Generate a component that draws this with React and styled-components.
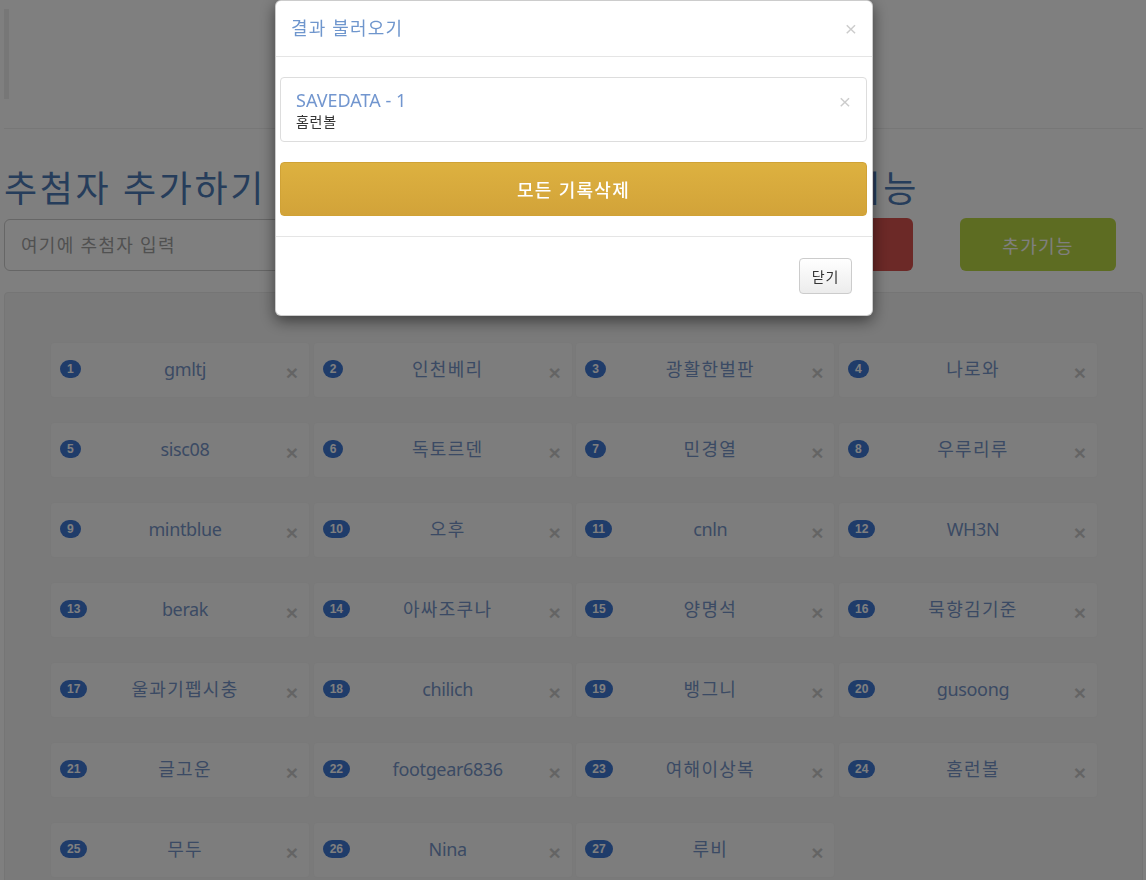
import React from "react";
import styled, { createGlobalStyle } from "styled-components";

const FONT = `"Noto Sans", "Noto Sans CJK KR", sans-serif`;
const KO = "0.072em";

const Global = createGlobalStyle`
  html, body { margin: 0; padding: 0; overflow: hidden; background: #fff; }
  body { font-family: ${FONT}; font-size: 14px; color: #333; }
  * { box-sizing: border-box; }
`;

const Page = styled.div`
  padding: 9px 3px 0 4px;
  height: 880px;
  overflow: hidden;
`;

const Quote = styled.blockquote`
  margin: 0;
  height: 90px;
  border-left: 5px solid #eee;
  padding: 10px 20px;
`;

const Rule = styled.hr`
  margin: 29px 0 39px;
  border: 0;
  border-top: 1px solid #eee;
`;

const Columns = styled.div`
  display: grid;
  grid-template-columns: 1fr 200px 156px;
  column-gap: 47px;
  padding-right: 27px;
`;

const Heading = styled.h1`
  margin: 0;
  font-size: 36px;
  line-height: 40px;
  font-weight: 400;
  letter-spacing: ${KO};
  color: #4d7bb6;
  white-space: nowrap;
  text-align: ${(p) => (p.$end ? "right" : "left")};
  margin-right: ${(p) => (p.$end ? "-6px" : "0")};
  margin-top: 1px;
`;

const Toolbar = styled(Columns)`
  margin-top: 9px;
  height: 53px;
  align-items: stretch;
`;

const Input = styled.input`
  margin-top: 1px;
  height: 52px;
  border: 1px solid #ccc;
  border-radius: 6px;
  padding: 0 16px;
  font-family: ${FONT};
  font-size: 18px;
  letter-spacing: ${KO};
  color: #555;
  &::placeholder { color: #a2a2a2; }
`;

const ActionButton = styled.button`
  border: 0;
  border-radius: 6px;
  background: ${(p) => p.$bg};
  color: #fff;
  font-family: ${FONT};
  font-size: 18px;
  letter-spacing: ${KO};
`;

const Well = styled.div`
  margin-top: 21px;
  background: #f5f5f5;
  border: 1px solid #eaeaea;
  border-radius: 4px;
  padding: 49px 44px 40px 45px;
`;

const Grid = styled.div`
  display: grid;
  grid-template-columns: repeat(4, 1fr);
  column-gap: 2.67px;
  row-gap: 24px;
`;

const Cell = styled.div`
  height: 56px;
  background: #fbfbfb;
  border: 1px solid #f2f2f2;
  border-radius: 4px;
  display: grid;
  grid-template-columns: 30px 1fr 24px;
  align-items: center;
  padding: 0 5px 0 9px;
`;

const Badge = styled.span`
  justify-self: start;
  margin-top: -3px;
  min-width: 10px;
  padding: 3px 7px;
  font-size: 12px;
  font-weight: 700;
  line-height: 12px;
  color: #fff;
  background: #3f78d4;
  border-radius: 10px;
  text-align: center;
  font-family: "Liberation Sans", sans-serif;
`;

const Name = styled.span`
  text-align: center;
  font-size: 18px;
  line-height: 26px;
  color: #7695c8;
  margin-top: -2px;
  white-space: nowrap;
  letter-spacing: ${(p) => (p.$hangul ? KO : "-0.02em")};
`;

const Close = styled.span`
  justify-self: ${(p) => (p.$end ? "end" : "center")};
  font-size: 21px;
  font-weight: ${(p) => (p.$bold ? 700 : 400)};
  line-height: 1;
  color: #000;
  opacity: 0.2;
  font-family: "Liberation Sans", sans-serif;
  margin-top: ${(p) => p.$dy || "0px"};
`;

const Backdrop = styled.div`
  position: fixed;
  inset: 0;
  background: rgba(0, 0, 0, 0.5);
`;

const Modal = styled.div`
  position: fixed;
  top: 0;
  left: 275px;
  width: 598px;
  background: #fff;
  border: 1px solid rgba(0, 0, 0, 0.2);
  border-radius: 6px;
  box-shadow: 0 5px 15px rgba(0, 0, 0, 0.5);
`;

const ModalHeader = styled.div`
  display: flex;
  align-items: center;
  justify-content: space-between;
  padding: 15px;
  border-bottom: 1px solid #e5e5e5;
`;

const ModalTitle = styled.h4`
  margin: 0;
  font-size: 18px;
  line-height: 25px;
  font-weight: 400;
  letter-spacing: 0.065em;
  color: #6f96cd;
`;

const ModalBody = styled.div`
  padding: 20px 5px 20px 4px;
`;

const SaveItem = styled.div`
  border: 1px solid #ddd;
  border-radius: 4px;
  padding: 9px 15px 9px;
  margin-bottom: 20px;
`;

const SaveRow = styled.div`
  display: flex;
  align-items: center;
  justify-content: space-between;
`;

const SaveTitle = styled.div`
  font-size: 18px;
  line-height: 24px;
  color: #7296cf;
`;

const SaveSub = styled.div`
  font-size: 14px;
  line-height: 20px;
  letter-spacing: 0.05em;
  color: #333;
`;

const DeleteAll = styled.button`
  display: block;
  width: 100%;
  height: 54px;
  border: 1px solid #d0a236;
  border-radius: 4px;
  background: linear-gradient(to bottom, #ddb140, #d2a339);
  color: #fff;
  font-family: ${FONT};
  font-size: 18px;
  font-weight: 500;
  letter-spacing: ${KO};
`;

const ModalFooter = styled.div`
  display: flex;
  justify-content: flex-end;
  padding: 21px 20px 21px;
  border-top: 1px solid #e5e5e5;
`;

const DefaultButton = styled.button`
  height: 36px;
  padding: 0 12px;
  border: 1px solid #ccc;
  border-radius: 4px;
  background: linear-gradient(to bottom, #fff, #ececec);
  color: #333;
  font-family: ${FONT};
  font-size: 14px;
  letter-spacing: 0.05em;
`;

const names = [
  "gmltj", "인천베리", "광활한벌판", "나로와",
  "sisc08", "독토르덴", "민경열", "우루리루",
  "mintblue", "오후", "cnln", "WH3N",
  "berak", "아싸조쿠나", "양명석", "묵향김기준",
  "울과기펩시충", "chilich", "뱅그니", "gusoong",
  "글고운", "footgear6836", "여해이상복", "홈런볼",
  "무두", "Nina", "루비",
];

const isHangul = (s) => /[가-힣]/.test(s);

export default function App() {
  return (
    <>
      <Global />
      <Page>
        <Quote />
        <Rule />
        <Columns>
          <Heading>추첨자 추가하기</Heading>
          <Heading $end>부가기능</Heading>
          <span />
        </Columns>
        <Toolbar>
          <Input placeholder="여기에 추첨자 입력" />
          <ActionButton $bg="#d9534f">초기화</ActionButton>
          <ActionButton $bg="#bbd844">추가기능</ActionButton>
        </Toolbar>
        <Well>
          <Grid>
            {names.map((n, i) => (
              <Cell key={i}>
                <Badge>{i + 1}</Badge>
                <Name $hangul={isHangul(n)}>{n}</Name>
                <Close $bold $dy="4px">×</Close>
              </Cell>
            ))}
          </Grid>
        </Well>
      </Page>
      <Backdrop />
      <Modal>
        <ModalHeader>
          <ModalTitle>결과 불러오기</ModalTitle>
          <Close $end>×</Close>
        </ModalHeader>
        <ModalBody>
          <SaveItem>
            <SaveRow>
              <SaveTitle>SAVEDATA - 1</SaveTitle>
              <Close $end $dy="4px">×</Close>
            </SaveRow>
            <SaveSub>홈런볼</SaveSub>
          </SaveItem>
          <DeleteAll>모든 기록삭제</DeleteAll>
        </ModalBody>
        <ModalFooter>
          <DefaultButton>닫기</DefaultButton>
        </ModalFooter>
      </Modal>
    </>
  );
}
